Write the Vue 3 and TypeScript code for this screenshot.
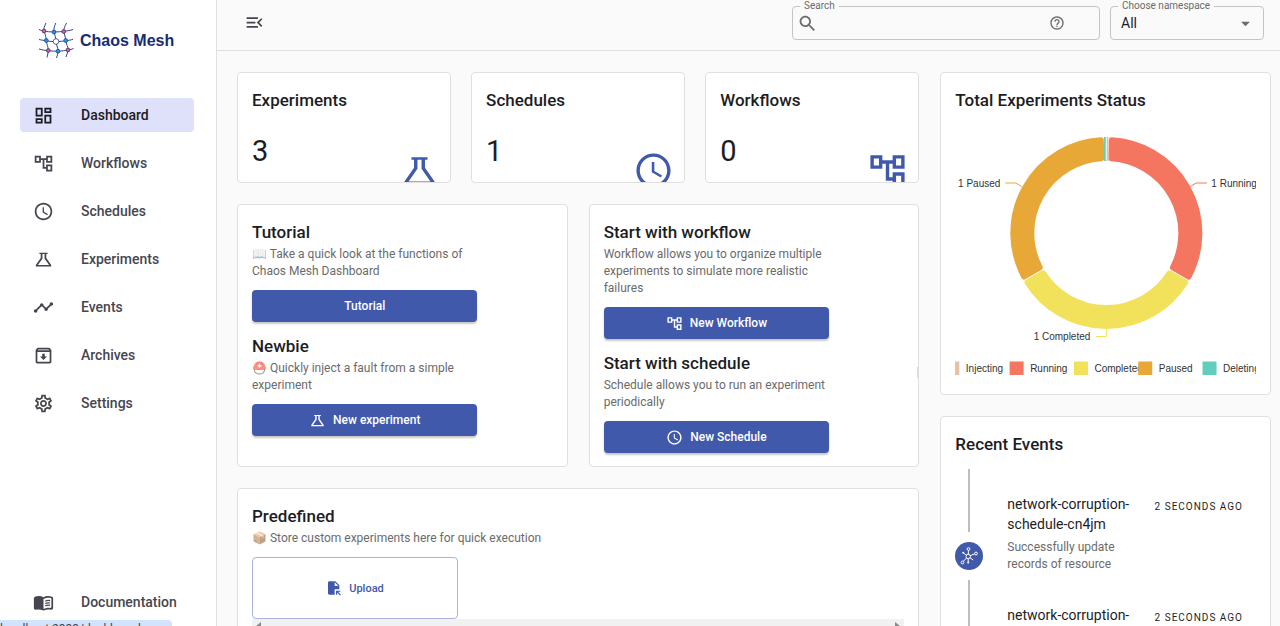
<script setup lang="ts">
import { ref } from 'vue'

type IconName =
  | 'dashboard' | 'workflow' | 'schedule' | 'experiment' | 'events' | 'archive' | 'settings'

interface NavItem { label: string; icon: IconName }

const icons: Record<IconName, string> = {
  dashboard: 'M19 5v2h-4V5h4M9 5v6H5V5h4m10 8v6h-4v-6h4M9 17v2H5v-2h4M21 3h-8v6h8V3zM11 3H3v10h8V3zm10 8h-8v10h8V11zm-10 4H3v6h8v-6z',
  workflow: 'M22 11V3h-7v3H9V3H2v8h7V8h2v10h4v3h7v-8h-7v3h-2V8h2v3h7zM7 9H4V5h3v4zm10 6h3v4h-3v-4zm0-10h3v4h-3V5z',
  schedule: 'M11.99 2C6.47 2 2 6.48 2 12s4.47 10 9.99 10C17.52 22 22 17.52 22 12S17.52 2 11.99 2zM12 20c-4.42 0-8-3.58-8-8s3.58-8 8-8 8 3.58 8 8-3.58 8-8 8zm.5-13H11v6l5.25 3.15.75-1.23-4.5-2.67z',
  experiment: 'M7.3 4.2h9.4v1.5h-1.5v4.7L20.8 18.4V20H3.2v-1.6L8.8 10.4V5.7H7.3zM10.8 5.7V11L5.6 18.4h12.8L13.2 11V5.7z',
  events: 'M23 8c0 1.1-.9 2-2 2-.18 0-.35-.02-.51-.07l-3.56 3.55c.05.16.07.34.07.52 0 1.1-.9 2-2 2s-2-.9-2-2c0-.18.02-.36.07-.52l-2.55-2.55c-.16.05-.34.07-.52.07s-.36-.02-.52-.07l-4.55 4.56c.05.16.07.33.07.51 0 1.1-.9 2-2 2s-2-.9-2-2 .9-2 2-2c.18 0 .35.02.51.07l4.56-4.55C8.02 9.36 8 9.18 8 9c0-1.1.9-2 2-2s2 .9 2 2c0 .18-.02.36-.07.52l2.55 2.55c.16-.05.34-.07.52-.07s.36.02.52.07l3.55-3.56C19.02 8.35 19 8.18 19 8c0-1.1.9-2 2-2s2 .9 2 2z',
  archive: 'M20.54 5.23l-1.39-1.68C18.88 3.21 18.47 3 18 3H6c-.47 0-.88.21-1.16.55L3.46 5.23C3.17 5.57 3 6.02 3 6.5V19c0 1.1.9 2 2 2h14c1.1 0 2-.9 2-2V6.5c0-.48-.17-.93-.46-1.27zM6.24 5h11.52l.83 1H5.42l.82-1zM5 19V8h14v11H5zm8.45-9h-2.9v3H8l4 4 4-4h-2.55z',
  settings: 'M19.43 12.98c.04-.32.07-.64.07-.98 0-.34-.03-.66-.07-.98l2.11-1.65c.19-.15.24-.42.12-.64l-2-3.46c-.09-.16-.26-.25-.44-.25-.06 0-.12.01-.17.03l-2.49 1c-.52-.4-1.08-.73-1.69-.98l-.38-2.65C14.46 2.18 14.25 2 14 2h-4c-.25 0-.46.18-.49.42l-.38 2.65c-.61.25-1.17.59-1.69.98l-2.49-1c-.06-.02-.12-.03-.18-.03-.17 0-.34.09-.43.25l-2 3.46c-.13.22-.07.49.12.64l2.11 1.65c-.04.32-.07.65-.07.98 0 .33.03.66.07.98l-2.11 1.65c-.19.15-.24.42-.12.64l2 3.46c.09.16.26.25.44.25.06 0 .12-.01.17-.03l2.49-1c.52.4 1.08.73 1.69.98l.38 2.65c.03.24.24.42.49.42h4c.25 0 .46-.18.49-.42l.38-2.65c.61-.25 1.17-.59 1.69-.98l2.49 1c.06.02.12.03.18.03.17 0 .34-.09.43-.25l2-3.46c.12-.22.07-.49-.12-.64l-2.11-1.65zm-1.98-1.71c.04.31.05.52.05.73 0 .21-.02.43-.05.73l-.14 1.13.89.7 1.08.84-.7 1.21-1.27-.51-1.04-.42-.9.68c-.43.32-.84.56-1.25.73l-1.06.43-.16 1.13-.2 1.35h-1.4l-.19-1.35-.16-1.13-1.06-.43c-.43-.18-.83-.41-1.23-.71l-.91-.7-1.06.43-1.27.51-.7-1.21 1.08-.84.89-.7-.14-1.13c-.03-.31-.05-.54-.05-.74s.02-.43.05-.73l.14-1.13-.89-.7-1.08-.84.7-1.21 1.27.51 1.04.42.9-.68c.43-.32.84-.56 1.25-.73l1.06-.43.16-1.13.2-1.35h1.39l.19 1.35.16 1.13 1.06.43c.43.18.83.41 1.23.71l.91.7 1.06-.43 1.27-.51.7 1.21-1.07.85-.89.7.14 1.13zM12 8c-2.21 0-4 1.79-4 4s1.79 4 4 4 4-1.79 4-4-1.79-4-4-4zm0 6c-1.1 0-2-.9-2-2s.9-2 2-2 2 .9 2 2-.9 2-2 2z',
}

const nav: NavItem[] = [
  { label: 'Dashboard', icon: 'dashboard' },
  { label: 'Workflows', icon: 'workflow' },
  { label: 'Schedules', icon: 'schedule' },
  { label: 'Experiments', icon: 'experiment' },
  { label: 'Events', icon: 'events' },
  { label: 'Archives', icon: 'archive' },
  { label: 'Settings', icon: 'settings' },
]
const active = ref('Dashboard')
const query = ref('')
const namespace = ref('All')

const stats: { title: string; count: number; icon: IconName }[] = [
  { title: 'Experiments', count: 3, icon: 'experiment' },
  { title: 'Schedules', count: 1, icon: 'schedule' },
  { title: 'Workflows', count: 0, icon: 'workflow' },
]

interface Guide { title: string; emoji?: string; text: string; action: string; icon?: IconName }
const guides: Guide[][] = [
  [
    { title: 'Tutorial', emoji: '📖', text: 'Take a quick look at the functions of Chaos Mesh Dashboard', action: 'Tutorial' },
    { title: 'Newbie', emoji: '⛑️', text: 'Quickly inject a fault from a simple experiment', action: 'New experiment', icon: 'experiment' },
  ],
  [
    { title: 'Start with workflow', text: 'Workflow allows you to organize multiple experiments to simulate more realistic failures', action: 'New Workflow', icon: 'workflow' },
    { title: 'Start with schedule', text: 'Schedule allows you to run an experiment periodically', action: 'New Schedule', icon: 'schedule' },
  ],
]

const events = [
  { id: 1, name: 'network-corruption-schedule-cn4jm', text: 'Successfully update records of resource', time: '2 seconds ago' },
  { id: 2, name: 'network-corruption-schedule-cn4jm', text: 'Successfully update records of resource', time: '2 seconds ago' },
]

const legend = [
  { label: 'Injecting', color: '#e8c1a0' },
  { label: 'Running', color: '#f47560' },
  { label: 'Completed', color: '#f1e15b' },
  { label: 'Paused', color: '#e8a838' },
  { label: 'Deleting', color: '#61cdbb' },
]

const CX = 151
const CY = 119
const OUTER = 96
const INNER = 72
const ROUND = 3

// Ring segment inset by the corner radius; the round-joined stroke grows it back to full size.
function arc(fromDeg: number, toDeg: number): string {
  const inset = ROUND + 0.4
  const ro = OUTER - ROUND
  const ri = INNER + ROUND
  const rad = (d: number) => (d * Math.PI) / 180
  const at = (r: number, a: number) =>
    `${(CX + r * Math.sin(a)).toFixed(2)} ${(CY - r * Math.cos(a)).toFixed(2)}`
  const a0 = rad(fromDeg)
  const a1 = rad(toDeg)
  const po = Math.asin(inset / ro)
  const pi = Math.asin(inset / ri)
  return `M${at(ro, a0 + po)}A${ro} ${ro} 0 0 1 ${at(ro, a1 - po)}L${at(ri, a1 - pi)}A${ri} ${ri} 0 0 0 ${at(ri, a0 + pi)}Z`
}
const segments = [
  { d: arc(1.3, 120), color: '#f47560' },
  { d: arc(120, 240), color: '#f1e15b' },
  { d: arc(240, 358.7), color: '#e8a838' },
]
</script>

<template>
  <div class="app">
    <aside class="sidebar">
      <a href="#" class="brand">
        <svg class="logo" viewBox="0 0 36 38" aria-hidden="true">
          <g stroke="#34468c" stroke-width="1" fill="none">
            <path d="M8 1C6 5 5.500 7 6 9C7 12 8 14 8.300 18.500C8.500 22 10.500 25 10.300 28.500C10.200 31 9.500 33 9 35.500" />
            <path d="M17.800 1C16 5 15.700 7 16 10C16.500 13 18 15 18 19C18 23 20 25 20 29C20 31 19.500 33 18.500 36" />
            <path d="M28.500 1C26.500 5 25.500 7 26 9.500C26.500 13 27.500 15 27.700 18.500C28 22 30.500 25 30 28C29.800 30 29 32 28 35" />
            <path d="M1 7.500C3 8.500 4 8.700 6 9C9 9.800 12 9.900 16 9.900C20 9.900 23 9.700 26 9.300C30 8.800 32 8.500 35 7.500" />
            <path d="M1 17.500C3 18 5 18.300 8.300 18.700C12 19.500 14 19.600 18 19.500C22 19.500 25 19.200 27.700 18.700C31 18.300 33 18 35 17.300" />
            <path d="M1 27C4 28 7 28.400 10.300 28.600C14 29.200 17 29.200 20 29.200C24 29.100 27 28.500 30 28C32 27.700 34 27.300 35.500 26.500" />
          </g>
          <g stroke="#172d72" stroke-width="0.700">
            <circle cx="6" cy="9" r="1.900" fill="#f5567d" /><circle cx="25.700" cy="9.500" r="1.900" fill="#f5567d" />
            <circle cx="10.300" cy="28.500" r="1.900" fill="#f5567d" /><circle cx="30" cy="28" r="1.900" fill="#f5567d" />
            <circle cx="16" cy="10" r="1.900" fill="#10a5f5" /><circle cx="8.300" cy="18.500" r="1.900" fill="#10a5f5" />
            <circle cx="27.700" cy="18.500" r="1.900" fill="#10a5f5" /><circle cx="20" cy="29.200" r="1.900" fill="#10a5f5" />
            <circle cx="18" cy="19.500" r="2.800" fill="#fff" />
          </g>
        </svg>
        <span>Chaos Mesh</span>
      </a>
      <nav class="nav">
        <a
          v-for="item in nav"
          :key="item.label"
          href="#"
          class="nav-item"
          :class="{ active: item.label === active }"
          @click.prevent="active = item.label"
        >
          <svg viewBox="0 0 24 24" aria-hidden="true"><path :d="icons[item.icon]" fill-rule="evenodd" /></svg>
          <span>{{ item.label }}</span>
        </a>
      </nav>
      <a href="#" class="nav-item docs">
        <svg viewBox="0 0 24 24" aria-hidden="true">
          <path fill-rule="evenodd" d="M17.500 4.500c-1.950 0-4.050.4-5.500 1.500-1.450-1.100-3.550-1.500-5.500-1.500-1.450 0-2.990.22-4.280.79C1.490 5.620 1 6.330 1 7.140v11.280c0 1.300 1.220 2.260 2.480 1.940.98-.25 2.020-.36 3.020-.36 1.560 0 3.220.26 4.560.92.6.3 1.280.3 1.870 0 1.340-.67 3-.92 4.560-.92 1 0 2.040.11 3.020.36 1.260.33 2.480-.63 2.480-1.940V7.140c0-.81-.49-1.520-1.220-1.850-1.280-.57-2.820-.79-4.270-.79zM21 17.230c0 .63-.58 1.090-1.200.98-.75-.14-1.530-.2-2.300-.2-1.700 0-4.150.65-5.500 1.500V8c1.350-.85 3.800-1.500 5.500-1.500.92 0 1.830.09 2.700.28.46.1.8.51.8.98v9.470z" />
          <path d="M14 10.500c1.600-.8 3.600-1 5.500-.6M14 13.200c1.600-.8 3.600-1 5.500-.6M14 15.900c1.600-.8 3.600-1 5.500-.6" fill="none" stroke="currentColor" stroke-width="1.400" />
        </svg>
        <span>Documentation</span>
      </a>
    </aside>

    <div class="page">
      <header class="topbar">
        <button class="icon-button" type="button" aria-label="Collapse menu">
          <svg viewBox="0 0 24 24"><path d="M3 18h13v-2H3v2zm0-5h10v-2H3v2zm0-7v2h13V6H3zm18 9.590L17.420 12 21 8.410 19.590 7l-5 5 5 5L21 15.590z" /></svg>
        </button>
        <div class="fields">
          <div class="field search">
            <label for="search">Search</label>
            <svg viewBox="0 0 24 24" class="glass" aria-hidden="true"><path d="M15.500 14h-.79l-.28-.27C15.410 12.590 16 11.110 16 9.500 16 5.910 13.090 3 9.500 3S3 5.910 3 9.500 5.910 16 9.500 16c1.610 0 3.090-.59 4.230-1.570l.27.28v.79l5 4.990L20.490 19l-4.990-5zm-6 0C7.010 14 5 11.990 5 9.500S7.010 5 9.500 5 14 7.010 14 9.500 11.990 14 9.500 14z" /></svg>
            <input id="search" v-model="query" type="text" />
            <svg viewBox="0 0 24 24" class="help" aria-hidden="true"><path d="M11 18h2v-2h-2v2zm1-16C6.480 2 2 6.480 2 12s4.480 10 10 10 10-4.480 10-10S17.520 2 12 2zm0 18c-4.410 0-8-3.590-8-8s3.590-8 8-8 8 3.590 8 8-3.590 8-8 8zm0-14c-2.210 0-4 1.790-4 4h2c0-1.100.9-2 2-2s2 .9 2 2c0 2-3 1.750-3 5h2c0-2.250 3-2.500 3-5 0-2.210-1.790-4-4-4z" /></svg>
          </div>
          <div class="field namespace">
            <label for="namespace">Choose namespace</label>
            <select id="namespace" v-model="namespace"><option>All</option></select>
            <svg viewBox="0 0 24 24" class="caret" aria-hidden="true"><path d="M7 10l5 5 5-5z" /></svg>
          </div>
        </div>
      </header>

      <main class="content">
        <div class="left">
          <div class="stats">
            <section v-for="s in stats" :key="s.title" class="card stat">
              <h2>{{ s.title }}</h2>
              <p class="count">{{ s.count }}</p>
              <svg viewBox="0 0 24 24" aria-hidden="true"><path :d="icons[s.icon]" fill-rule="evenodd" /></svg>
            </section>
          </div>

          <div class="guides">
            <section v-for="(column, i) in guides" :key="i" class="card guide-card">
              <div v-for="g in column" :key="g.title" class="guide">
                <h2>{{ g.title }}</h2>
                <p class="muted"><span v-if="g.emoji" class="emoji">{{ g.emoji }}</span>{{ g.emoji ? ' ' : '' }}{{ g.text }}</p>
                <button type="button" class="primary">
                  <svg v-if="g.icon" viewBox="0 0 24 24" aria-hidden="true"><path :d="icons[g.icon]" fill-rule="evenodd" /></svg>
                  {{ g.action }}
                </button>
              </div>
            </section>
          </div>

          <section class="card">
            <h2>Predefined</h2>
            <p class="muted"><span class="emoji">📦</span> Store custom experiments here for quick execution</p>
            <button type="button" class="upload">
              <svg viewBox="0 0 24 24" aria-hidden="true">
                <path fill-rule="evenodd" d="M5 2h9l6 6v6h-7v8H5c-1.100 0-2-.9-2-2V4c0-1.100.9-2 2-2zm8 1.500V9h5.500z" />
                <path d="M15 16h6.500v1.700h-3.400l4.200 4.200-1.200 1.200-4.300-4.300v3.400H15z" />
              </svg>
              Upload
            </button>
            <div class="scroll-track" aria-hidden="true">
              <svg viewBox="0 0 8 10"><path d="M7 1v8L2 5z" /></svg>
              <svg viewBox="0 0 8 10"><path d="M1 1v8l5-4z" /></svg>
            </div>
          </section>
        </div>

        <div class="right">
          <section class="card">
            <h2>Total Experiments Status</h2>
            <svg class="chart" viewBox="0 0 300 266" role="img" aria-label="Experiment counts by status">
              <path
                v-for="s in segments" :key="s.color" :d="s.d" :fill="s.color" :stroke="s.color"
                stroke-width="6" stroke-linejoin="round"
              />
              <path d="M149.500 23v24" stroke="#61cdbb" stroke-width="1.800" />
              <path d="M152.200 23v24" stroke="#e8c1a0" stroke-width="1.800" />
              <g fill="none" stroke-width="1">
                <path d="M235 72.500l6-3.500h10.500" stroke="#f47560" />
                <path d="M66.500 72.500l-6-3.500H50" stroke="#e8a838" />
                <path d="M151 215.500v7h-10.500" stroke="#f1e15b" />
              </g>
              <text x="256" y="73">1 Running</text>
              <text x="45" y="73" text-anchor="end">1 Paused</text>
              <text x="135" y="226" text-anchor="end">1 Completed</text>
              <g v-for="(l, i) in legend" :key="l.label">
                <rect :x="-10 + i * 64.300" y="247.500" width="14" height="13.500" :fill="l.color" />
                <text :x="10.500 + i * 64.300" y="258">{{ l.label }}</text>
              </g>
            </svg>
          </section>

          <section class="card">
            <h2>Recent Events</h2>
            <ul class="timeline">
              <li v-for="e in events" :key="e.id">
                <div class="rail">
                  <span class="line"></span>
                  <span class="dot">
                    <svg viewBox="0 0 18 18" aria-hidden="true">
                      <path d="M8.200 9.500L8.500 3M8.200 9.500L15.500 6.500M8.200 9.500V15M8.200 9.500L2.500 15M8.200 9.500L3.500 6M8.200 9.500l5 3.500" fill="none" stroke="currentColor" />
                      <g fill="#4159aa" stroke="currentColor">
                        <circle cx="8.200" cy="9.500" r="2.200" /><circle cx="8.500" cy="2" r="1.400" /><circle cx="16" cy="6.500" r="1.400" />
                        <circle cx="2.500" cy="15.500" r="1.400" />
                      </g>
                      <circle cx="8.200" cy="15.500" r="1" /><circle cx="3.200" cy="5.700" r="1" />
                    </svg>
                  </span>
                </div>
                <div class="event">
                  <h3>{{ e.name }}</h3>
                  <p class="muted">{{ e.text }}</p>
                </div>
                <time>{{ e.time }}</time>
              </li>
            </ul>
          </section>
        </div>
      </main>
    </div>

    <div class="status">localhost:2333/dashboard</div>
  </div>
</template>

<style>
html, body { margin: 0; background: #fafafa; }
</style>

<style scoped>
* { box-sizing: border-box; }
.app {
  display: flex;
  height: 100vh;
  overflow: hidden;
  font-family: Roboto, "Noto Sans", sans-serif;
  font-size: 12px;
  color: #1d1d1f;
}
svg { fill: currentColor; flex: none; }
a { color: inherit; text-decoration: none; }
h2, h3, p, ul { margin: 0; padding: 0; }
button, input, select { font: inherit; color: inherit; }

.sidebar {
  flex: none;
  width: 217px;
  display: flex;
  flex-direction: column;
  background: #fff;
  border-right: 1px solid #e0e0e0;
}
.brand {
  display: flex;
  align-items: center;
  gap: 6px;
  height: 82px;
  padding-left: 38px;
  color: #172d72;
  font: bold 16px "Liberation Sans", Arial, sans-serif;
}
.logo { width: 36px; height: 38px; }
.nav {
  flex: 1;
  display: flex;
  flex-direction: column;
  gap: 14px;
  padding-top: 16px;
}
.nav-item {
  display: flex;
  align-items: center;
  gap: 27px;
  height: 34px;
  margin: 0 22px 0 20px;
  padding-left: 13px;
  border-radius: 4px;
  color: #46464f;
  font-size: 14px;
  font-weight: 500;
}
.nav-item svg { width: 21px; height: 21px; }
.nav-item.active { background: #dfe0fa; color: #1b1b23; }
.docs { margin-bottom: 7px; }

.page { flex: 1; min-width: 0; display: flex; flex-direction: column; }
.topbar {
  flex: none;
  display: flex;
  align-items: flex-start;
  justify-content: space-between;
  height: 51px;
  padding: 6px 16px 0 27px;
  border-bottom: 1px solid #e0e0e0;
}
.icon-button {
  display: flex;
  padding: 6px 0;
  border: 0;
  background: none;
  color: #46464f;
}
.icon-button svg { width: 21px; height: 21px; }
.fields { display: flex; gap: 10px; }
.field {
  position: relative;
  display: flex;
  align-items: center;
  height: 34px;
  border: 1px solid #c4c4c4;
  border-radius: 4px;
  color: #6b6b6b;
}
.field label {
  position: absolute;
  top: -8px;
  left: 7px;
  padding: 0 4px;
  background: #fafafa;
  font-size: 10px;
  line-height: 14px;
}
.search { width: 308px; padding: 0 34px 0 4px; }
.search input {
  flex: 1;
  min-width: 0;
  border: 0;
  outline: 0;
  background: none;
  font-size: 14px;
}
.glass { width: 21px; height: 21px; }
.help { width: 16px; height: 16px; }
.namespace { width: 154px; }
.namespace select {
  width: 100%;
  height: 100%;
  padding: 0 10px;
  border: 0;
  appearance: none;
  background: none;
  color: #1d1d1f;
  font-size: 14px;
}
.caret { position: absolute; right: 7px; width: 21px; height: 21px; pointer-events: none; }

.content {
  flex: 1;
  min-height: 0;
  overflow: hidden;
  display: grid;
  grid-template-columns: repeat(3, minmax(0, 1fr));
  align-items: start;
  gap: 21px;
  padding: 21px 9px 0 20px;
}
.left { grid-column: span 2; display: grid; gap: 21px; }
.right { display: grid; gap: 21px; }
.stats { display: grid; grid-template-columns: repeat(3, minmax(0, 1fr)); gap: 20px; }
.guides { display: grid; grid-template-columns: repeat(2, minmax(0, 1fr)); gap: 21px; }

.card {
  min-width: 0;
  padding: 14px;
  border: 1px solid #e0e0e0;
  border-radius: 4px;
  background: #fff;
}
h2 { font-size: 17px; line-height: 27px; font-weight: 500; }
.muted { color: #6b6b6b; line-height: 17px; }
.emoji { opacity: 0.6; }

.stat { position: relative; height: 111px; overflow: hidden; }
.count { margin-top: 19px; font-size: 29px; line-height: 36px; }
.stat svg {
  position: absolute;
  right: 10px;
  bottom: -9px;
  width: 41px;
  height: 41px;
  color: #4159aa;
}

.guide-card { position: relative; display: flex; flex-direction: column; gap: 11px; padding-bottom: 13px; }
.guide-card:last-child::after {
  content: "";
  position: absolute;
  top: 62%;
  right: -1px;
  width: 2px;
  height: 11px;
  background: #dcdcdc;
}
.guide { width: 75%; }
.primary {
  display: flex;
  align-items: center;
  justify-content: center;
  gap: 7px;
  width: 100%;
  height: 32px;
  margin-top: 10px;
  border: 0;
  border-radius: 4px;
  background: #4159aa;
  color: #fff;
  font-weight: 500;
  box-shadow: 0 2px 2px rgba(0, 0, 0, 0.22);
}
.primary svg { width: 17px; height: 17px; }

.upload {
  display: flex;
  align-items: center;
  justify-content: center;
  gap: 7px;
  width: 206px;
  height: 62px;
  margin-top: 10px;
  border: 1px solid #a9b3dc;
  border-radius: 4px;
  background: #fff;
  color: #4159aa;
  font-size: 11px;
  font-weight: 500;
}
.upload svg { width: 16px; height: 16px; }
.scroll-track {
  display: flex;
  justify-content: space-between;
  align-items: center;
  height: 13px;
  padding: 0 2px;
  background: #f1f1f1;
  color: #8a8a8a;
}
.scroll-track svg { width: 8px; height: 10px; }

.chart { display: block; width: 100%; height: 266px; }
.chart text { font: 10px "Liberation Sans", Arial, sans-serif; fill: #333; }

.timeline { list-style: none; padding-top: 11px; }
.timeline li { display: flex; align-items: stretch; height: 111px; }
.rail { flex: none; display: flex; flex-direction: column; align-items: center; width: 28px; }
.line { flex: 1; width: 2px; background: #bdbdbd; }
.dot {
  display: flex;
  align-items: center;
  justify-content: center;
  width: 28px;
  height: 28px;
  margin: 10px 0;
  border-radius: 50%;
  background: #4159aa;
  color: #fff;
}
.dot svg { width: 18px; height: 18px; }
.event { flex: none; width: 150px; padding: 25px 0 0 24px; }
.event h3 { margin-bottom: 5px; font-size: 14px; line-height: 20px; font-weight: 400; }
time {
  margin: 29px 13px 0 auto;
  font-size: 10px;
  line-height: 17px;
  text-transform: uppercase;
  letter-spacing: 1px;
  white-space: nowrap;
}

.status {
  position: fixed;
  left: 0;
  bottom: 0;
  width: 172px;
  height: 6px;
  overflow: hidden;
  border-radius: 0 4px 0 0;
  background: #d3e3fd;
  color: #46464f;
  line-height: 18px;
}
</style>
